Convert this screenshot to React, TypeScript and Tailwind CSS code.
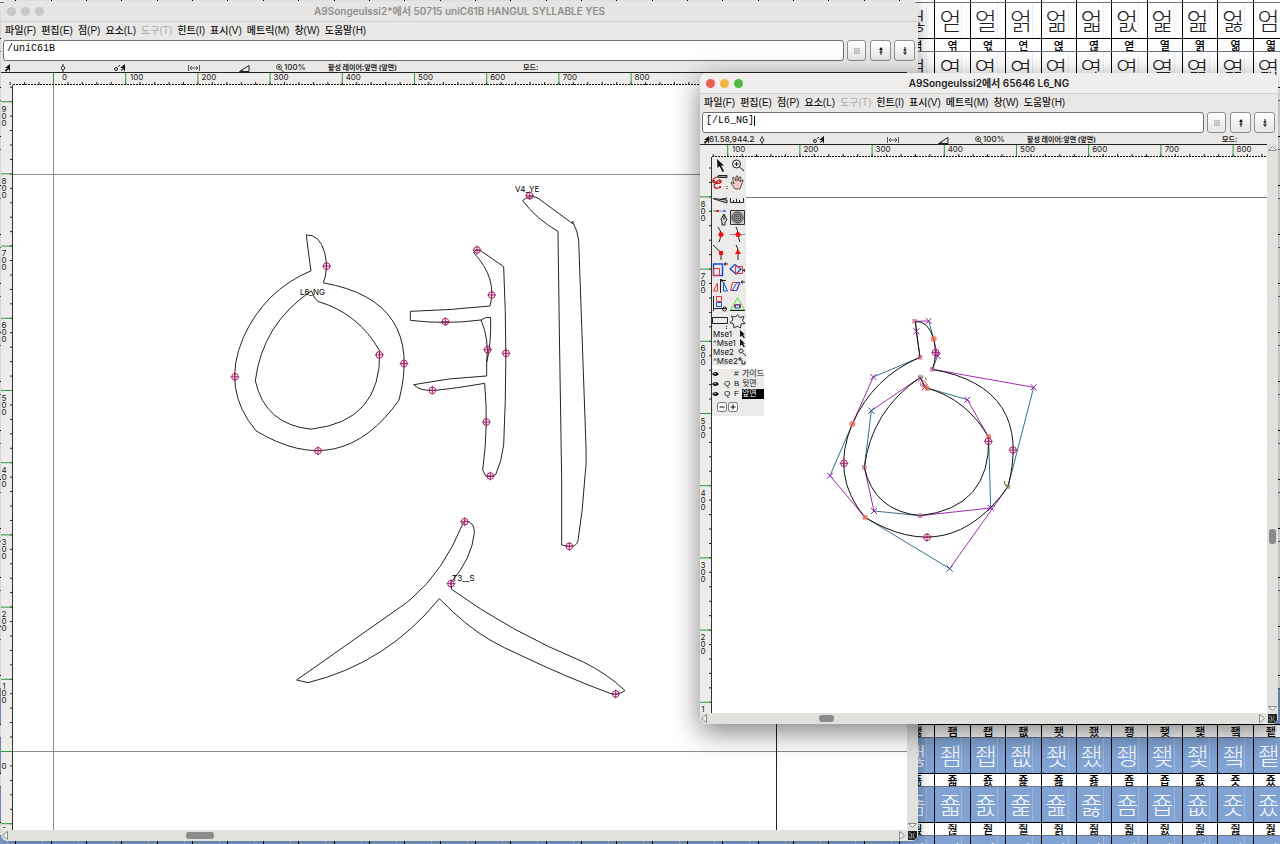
import type { ReactNode } from 'react';

// ---------------------------------------------------------------------------
// Types and data
// ---------------------------------------------------------------------------

type Point = [number, number];

/** A quadratic segment: off-curve control followed by the on-curve end. */
type Segment = [Point, Point];

interface Contour {
  start: Point;
  segments: Segment[];
}

const MENUS = [
  '파일(F)',
  '편집(E)',
  '점(P)',
  '요소(L)',
  '도구(T)',
  '힌트(I)',
  '표시(V)',
  '메트릭(M)',
  '창(W)',
  '도움말(H)',
];

/** Screen pixels per 100 font units at 100% zoom. */
const HUNDRED = 72.2;

// Outline coordinates are kept at three times the screen size.
const NG_CONTOURS: Contour[] = [
  {
    start: [330, 172],
    segments: [
      [[319, 94], [316, 64]],
      [[356, 63], [371, 117]],
      [[383, 168], [367, 208]],
      [[671, 262], [594, 560]],
      [[419, 806], [165, 652]],
      [[60, 527], [127, 372]],
      [[190, 231], [330, 172]],
    ],
  },
  {
    start: [331, 232],
    segments: [
      [[184, 332], [163, 502]],
      [[192, 633], [330, 647]],
      [[542, 624], [536, 412]],
      [[472, 299], [351, 264]],
      [[344, 262], [331, 232]],
    ],
  },
];

const NG_EXTREMA: Point[] = [[377, 158], [609, 450], [535, 424], [102, 490], [351, 712]];

const YE_EXTREMA: Point[] = [
  [771, 210],
  [815, 345],
  [676, 425],
  [803, 509],
  [858, 520],
  [637, 631],
  [799, 726],
  [811, 888],
  [929, 47],
  [1048, 1099],
];

const S_EXTREMA: Point[] = [[554, 125], [513, 311], [1007, 642]];

const CORNERS: Point[] = [[314, 64], [330, 172], [367, 208], [163, 502], [330, 647]];
const CURVES: Point[] = [[371, 117], [127, 372]];
const TANGENTS: Point[] = [[165, 652], [536, 410], [351, 265]];
const HINTED: Point[] = [[594, 560], [331, 231]];

function contourPath({ start, segments }: Contour) {
  return `M${start} ${segments.map(([off, on]) => `Q${off} ${on}`).join(' ')}Z`;
}

// ---------------------------------------------------------------------------
// Font view behind the glyph windows
// ---------------------------------------------------------------------------

const COLUMNS = Array.from({ length: 37 }, (_, i) => i);
const ROWS = Array.from({ length: 18 }, (_, i) => i);

/** Character of a cell; cells that the glyph windows cover stay blank. */
function syllable(row: number, column: number) {
  if (column < 26 || (row > 1 && row < 15)) return null;
  return String.fromCharCode(0xac00 + 6587 + row * 51 + column - 27);
}

function FontView() {
  return (
    <div
      aria-hidden="true"
      className="absolute -top-[11px] -left-[19px] w-[1308px] font-['Noto_Sans_CJK_KR',sans-serif]"
    >
      {ROWS.map((row) => (
        <div key={row}>
          <div className="grid h-[13px] grid-cols-37 border-t border-black bg-white">
            {COLUMNS.map((c) => (
              <span
                key={c}
                className="border-r border-black text-center text-[11px]/[12px] font-medium text-black"
              >
                {row > 0 && syllable(row, c)}
              </span>
            ))}
          </div>
          <div
            className={
              row >= 14
                ? 'grid h-[36px] grid-cols-37 border-t border-gray-500 bg-[#80a3d4] text-[#f4f7fc]'
                : 'grid h-[36px] grid-cols-37 border-t border-gray-500 bg-white text-[#222]'
            }
          >
            {COLUMNS.map((c) => (
              <span key={c} className="border-r border-black">
                <span className="block h-full w-[27px] border-r border-gray-300/40 text-right text-[24px]/[34px] font-light">
                  {syllable(row, c)}
                </span>
              </span>
            ))}
          </div>
        </div>
      ))}
    </div>
  );
}

// ---------------------------------------------------------------------------
// Rulers
// ---------------------------------------------------------------------------

const RULER_TEXT = 'fill-[#222] font-[Inter,sans-serif] text-[8px]';

/** Horizontal ruler; `zero` is the x of font unit 0. */
function HorizontalRuler({ zero, labels }: { zero: number; labels: number[] }) {
  const ticks = Array.from({ length: 70 }, (_, i) => zero + ((i - 4) * HUNDRED) / 5);
  return (
    <svg className="block h-[13px] w-full border-t border-[#222] bg-[#edecea]" aria-hidden="true">
      <line x1="12" x2="100%" y1="11.5" y2="11.5" stroke="#111" strokeDasharray="2 1" />
      {ticks.map((x) => (
        <line key={x} x1={x} x2={x} y1="9" y2="12" stroke="#222" />
      ))}
      {labels.map((n) => {
        const x = zero + (n * HUNDRED) / 100;
        return (
          <g key={n}>
            <line x1={x} x2={x} y1="0" y2="11" stroke="#2c9a3c" />
            <text x={x + 11} y="7" textAnchor="middle" className={RULER_TEXT}>
              {n}
            </text>
          </g>
        );
      })}
    </svg>
  );
}

/** Vertical ruler with the digits stacked; `zero` is the y of font unit 0. */
function VerticalRuler({ zero, labels }: { zero: number; labels: number[] }) {
  const ticks = Array.from({ length: 60 }, (_, i) => zero + ((6 - i) * HUNDRED) / 5);
  return (
    <svg className="block h-full w-[12px] shrink-0 bg-[#edecea]" aria-hidden="true">
      <line x1="11.5" x2="11.5" y1="0" y2="100%" stroke="#333" />
      {ticks.map((y) => (
        <line key={y} x1="9" x2="11" y1={y} y2={y} stroke="#222" />
      ))}
      {labels.map((n) => {
        const y = zero - (n * HUNDRED) / 100;
        const digits = String(n).split('');
        const first = y + 17 - (digits.length - 1) * 3.5;
        return (
          <g key={n}>
            <line x1="0" x2="11" y1={y} y2={y} stroke="#2c9a3c" />
            {digits.map((d, i) => (
              <text key={i} x="3" y={first + i * 7} textAnchor="middle" className={RULER_TEXT}>
                {d}
              </text>
            ))}
          </g>
        );
      })}
    </svg>
  );
}

// ---------------------------------------------------------------------------
// Window chrome
// ---------------------------------------------------------------------------

function InfoBar({ position }: { position?: string }) {
  return (
    <div className="flex h-[10px] pl-1 font-[Inter,'Noto_Sans_CJK_KR',sans-serif] text-[8px]/[11px] font-medium whitespace-nowrap text-[#222]">
      <span className="flex w-[54px] shrink-0">
        <svg className="mt-[2px] h-2 w-[5px] shrink-0" viewBox="0 0 5 8">
          <path d="M5 0v8L3.500 5 1 8 0 6l3-2H0z" fill="#111" />
        </svg>
        {position}
      </span>
      <span className="w-[53px] shrink-0">
        <svg className="mt-[2px] size-2" viewBox="0 0 8 8">
          <path d="M4 0v1.500M4 1.500l2 2.500-2 2.500L2 4zM4 6.500V8" fill="none" stroke="#222" />
        </svg>
      </span>
      <span className="w-[75px] shrink-0">
        <svg className="mt-[2px] ml-[2px] h-2 w-[12px]" viewBox="0 0 12 8">
          <circle cx="2" cy="5" r="1.500" fill="none" stroke="#222" />
          <path d="M4 3l2-2" stroke="#222" />
          <path d="M11 0v8L9.500 5 7.500 7 7 6l2-2H6z" fill="#111" />
        </svg>
      </span>
      <span className="w-[52px] shrink-0">
        <svg className="mt-[2px] ml-px h-2 w-[12px]" viewBox="0 0 12 8">
          <path d="M.5 1v6M11.500 1v6M2 4h8M4 2L2 4l2 2M8 2l2 2-2 2" fill="none" stroke="#333" strokeWidth=".8" />
        </svg>
      </span>
      <span className="w-[37px] shrink-0">
        <svg className="mt-[2px] h-2 w-[12px]" viewBox="0 0 12 8">
          <path d="M.5 7.500L10 1.500v6zM3 6l1 1.500" fill="none" stroke="#222" />
        </svg>
      </span>
      <span className="flex w-[52px] shrink-0">
        <svg className="mt-[2px] size-2 shrink-0" viewBox="0 0 8 8">
          <path d="M4.500 5L7.500 8M2 3h2M3 2v2" stroke="#222" />
          <circle cx="3" cy="3" r="2.500" fill="none" stroke="#222" strokeWidth=".8" />
        </svg>
        100%
      </span>
      <span className="w-[195px] shrink-0 text-[7px]/[12px] font-bold">활성 레이어:앞면 (앞면)</span>
      <span className="text-[7px]/[12px] font-bold">모드:</span>
    </div>
  );
}

const ENTRY_BUTTON =
  'flex h-[21px] items-center justify-center rounded-[3px] border border-[#8e8e8c] bg-linear-to-b from-white to-[#e6e6e4]';

function EntryRow({ value, caret }: { value: string; caret?: boolean }) {
  return (
    <div className="flex h-[22px] gap-[3px] pr-[3px] pl-[2px]">
      <label className="relative min-w-0 flex-1">
        <span className="sr-only">글리프</span>
        <input
          type="text"
          defaultValue={value}
          className="block h-[21px] w-full rounded-[3px] border border-[#6e6e6c] bg-white pb-1 pl-[3px] font-['Liberation_Mono',monospace] text-[10px] text-black outline-none"
        />
        {caret && <span className="absolute top-[4px] left-[52px] h-[10px] w-px bg-black" />}
      </label>
      <button type="button" aria-label="목록" className={`${ENTRY_BUTTON} w-[19px]`}>
        <svg className="size-[6px]" viewBox="0 0 6 6">
          <path d="M.5.5h5v5h-5zM2 2.500h2v1.500H2z" fill="#ddd" stroke="#bbb" />
        </svg>
      </button>
      <button type="button" aria-label="이전" className={`${ENTRY_BUTTON} ml-px w-[21px]`}>
        <svg className="h-2 w-[6px]" viewBox="0 0 6 8">
          <path d="M3 0l2 3H1zM2.500 2h1v6h-1zM1.500 4.500h3v1h-3z" fill="#111" />
        </svg>
      </button>
      <button type="button" aria-label="다음" className={`${ENTRY_BUTTON} w-[21px]`}>
        <svg className="h-2 w-[6px]" viewBox="0 0 6 8">
          <path d="M3 8l2-3H1zM2.500 0h1v6h-1zM1.500 2.500h3v1h-3z" fill="#111" />
        </svg>
      </button>
    </div>
  );
}

function Arrow({ d }: { d: string }) {
  return (
    <svg className="size-[11px] shrink-0" viewBox="0 0 11 11" aria-hidden="true">
      <path d={d} fill="#f4f4f2" stroke="#8a8a88" />
    </svg>
  );
}

interface GlyphWindowProps {
  title: string;
  active?: boolean;
  entry: string;
  position?: string;
  zeroX: number;
  zeroY: number;
  labelsX: number[];
  labelsY: number[];
  verticalThumb?: ReactNode;
  horizontalThumb: ReactNode;
  className: string;
  children: ReactNode;
}

function GlyphWindow({
  title,
  active = false,
  entry,
  position,
  zeroX,
  zeroY,
  labelsX,
  labelsY,
  verticalThumb,
  horizontalThumb,
  className,
  children,
}: GlyphWindowProps) {
  return (
    <section
      aria-label={title}
      className={`absolute flex flex-col overflow-hidden rounded-[7px] bg-[#e9e8e6] ${className}`}
    >
      <header
        className={`relative flex h-[21px] shrink-0 items-center justify-center border-b border-[#d2d1cf] ${active ? 'bg-[#f0efed]' : 'bg-[#e6e5e3]'}`}
      >
        <div className="absolute left-[6px] flex gap-[5px]">
          <button
            type="button"
            aria-label="닫기"
            className={`size-[9px] rounded-full ${active ? 'bg-[#ec5f55]' : 'bg-[#c9c8c6]'}`}
          />
          <button
            type="button"
            aria-label="최소화"
            className={`size-[9px] rounded-full ${active ? 'bg-[#f4b441]' : 'bg-[#c9c8c6]'}`}
          />
          <button
            type="button"
            aria-label="확대"
            className={`size-[9px] rounded-full ${active ? 'bg-[#51b944]' : 'bg-[#c9c8c6]'}`}
          />
        </div>
        <h1
          className={`font-[Inter,'Noto_Sans_CJK_KR',sans-serif] text-[10px]/[16px] font-semibold ${active ? 'text-[#222]' : 'text-[#8f8e8c]'}`}
        >
          {title}
        </h1>
      </header>
      <nav className="flex h-[18px] shrink-0 items-center gap-[5px] pl-1 font-['Liberation_Sans','Noto_Sans_CJK_KR',sans-serif] text-[10px]/[14px] font-medium whitespace-nowrap text-[#111]">
        {MENUS.map((m) => (
          <button key={m} type="button" disabled={m === '도구(T)'} className="disabled:text-[#b0afad]">
            {m}
          </button>
        ))}
      </nav>
      <EntryRow value={entry} caret={active} />
      <InfoBar position={position} />
      <div className="flex min-h-0 flex-1">
        <div className="flex min-w-0 flex-1 flex-col">
          <HorizontalRuler zero={zeroX} labels={labelsX} />
          <div className="flex min-h-0 flex-1">
            <VerticalRuler zero={zeroY} labels={labelsY} />
            <div className="relative min-w-0 flex-1 bg-white">{children}</div>
          </div>
        </div>
        <div className="flex w-[11px] shrink-0 flex-col bg-[#e1e2de]">
          <Arrow d="M1.500 6.500h8l-4-4z" />
          <div className="flex-1">{verticalThumb}</div>
          <Arrow d="M1.500 4.500h8l-4 4z" />
        </div>
      </div>
      <div className="flex h-[11px] shrink-0 bg-[#e1e2de]">
        <Arrow d="M6.500 1.500v8l-5-4z" />
        <div className="flex-1">{horizontalThumb}</div>
        <Arrow d="M3.500 1.500v8l5-4z" />
        <svg className="size-[11px] shrink-0" viewBox="0 0 11 11" aria-hidden="true">
          <path d="M1 1h9v7l-2 2H1z" fill="#222" />
          <path d="M2 6l2 3M4 3l1 5M7 3l-1 3 2 3M2 3h1" stroke="#bbb" strokeWidth=".8" />
        </svg>
      </div>
    </section>
  );
}

// ---------------------------------------------------------------------------
// Glyph drawing
// ---------------------------------------------------------------------------

function Extrema({ points }: { points: Point[] }) {
  return (
    <g fill="none" stroke="#a8206c" strokeWidth="3">
      {points.map(([x, y]) => (
        <path
          key={`${x},${y}`}
          d={`M${x - 10} ${y}a10 10 0 1 0 20 0a10 10 0 1 0-20 0M${x - 13} ${y}h26M${x} ${y - 13}v26`}
        />
      ))}
    </g>
  );
}

const CANVAS_TEXT = "fill-black font-[Inter,'Liberation_Sans',sans-serif] text-[8px]";

/** Syllable built from three references, shown as plain outlines. */
function SyllableCanvas() {
  return (
    <svg className="absolute inset-0 size-full" aria-hidden="true">
      <g transform="translate(-13 -85)">
        <g stroke="#8c8c8c">
          <path d="M13 174.500h900M13 751.500h900M53.500 80v760" />
          <path d="M776.500 80v760" stroke="#222" />
        </g>
        <g transform="translate(201 213.500) scale(.33333)" fill="none" stroke="#222" strokeWidth="3">
          {NG_CONTOURS.map((c) => (
            <path key={contourPath(c)} d={contourPath(c)} />
          ))}
          <Extrema points={NG_EXTREMA} />
        </g>
        <g transform="translate(220 180) scale(.33333)" fill="none" stroke="#222" strokeWidth="3">
          <path d="M571 394Q690 391 810 378Q833 295 761 218Q768 205 785 214L851 260Q864 530 851 795Q845 845 827 884Q812 894 797 888L788 870Q806 740 794 610Q700 626 645 631Q600 634 581 614Q690 592 800 588V548Q808 475 783 420Q676 434 571 421Z" />
          <path d="M783 420Q795 411 812 412Q814 490 800 548" />
          <path d="M908 62Q950 118 1014 154L1018 450L1025 900V1095Q1048 1102 1060 1098Q1073 1094 1075 1075Q1089 990 1094 900Q1101 850 1098 800L1076 180Q1072 150 1060 130L1058 124V131L952 53Q925 44 908 62Z" />
          <Extrema points={YE_EXTREMA} />
        </g>
        <g transform="translate(280 480) scale(.33333)" fill="none" stroke="#222" strokeWidth="3">
          <path d="M549 130Q490 275 395 355Q380 369 360 382L50 600L84 608Q320 550 478 356Q560 440 630 480Q670 503 720 525Q860 592 990 640Q1010 648 1035 632Q980 580 910 546Q690 455 515 328L513 308Q575 235 583 160Q585 125 555 123Q550 126 549 130Z" />
          <Extrema points={S_EXTREMA} />
        </g>
        <text x="300" y="295" className={CANVAS_TEXT}>
          L6_NG
        </text>
        <text x="515" y="192" className={CANVAS_TEXT}>
          V4_YE
        </text>
        <text x="452" y="581" className={CANVAS_TEXT}>
          T3__S
        </text>
      </g>
    </svg>
  );
}

/** Editable component with its control handles and point markers. */
function ComponentCanvas() {
  return (
    <svg className="absolute inset-0 size-full" aria-hidden="true">
      <g transform="translate(-712 -157)">
        <path d="M712 197.500h600" stroke="#777" />
        <g transform="translate(810 300) scale(.33333)" fill="none" strokeWidth="3">
          {NG_CONTOURS.map(({ start, segments }) =>
            segments.map(([off, on], i) => {
              const from = i === 0 ? start : segments[i - 1][1];
              return (
                <g key={`${off}`}>
                  <path d={`M${from}L${off}`} stroke="#a02cb0" />
                  <path d={`M${off}L${on}`} stroke="#35708c" />
                </g>
              );
            }),
          )}
          {NG_CONTOURS.map((c) => (
            <path key={contourPath(c)} d={contourPath(c)} stroke="#111" />
          ))}
          {NG_CONTOURS.flatMap((c) => c.segments).map(([[x, y]]) => (
            <path
              key={`${x},${y}`}
              d={`M${x - 9} ${y - 9}l18 18M${x + 9} ${y - 9}l-18 18`}
              stroke={x === 419 || x === 184 ? '#1d4f86' : '#8a1ea0'}
            />
          ))}
          {CORNERS.map(([x, y]) => (
            <rect key={`${x},${y}`} x={x - 7} y={y - 7} width="14" height="14" fill="#b0507c" fillOpacity=".6" />
          ))}
          {CURVES.map(([x, y]) => (
            <circle key={`${x},${y}`} cx={x} cy={y} r="9" fill="#f06a50" fillOpacity=".8" />
          ))}
          {TANGENTS.map(([x, y]) => (
            <rect key={`${x},${y}`} x={x - 7} y={y - 7} width="14" height="14" fill="#f06a50" fillOpacity=".8" />
          ))}
          {HINTED.map(([x, y]) => (
            <rect key={`${x},${y}`} x={x - 7} y={y - 7} width="14" height="14" fill="#8f8f50" fillOpacity=".6" />
          ))}
          <circle cx="340" cy="252" r="9" stroke="#e8705c" />
          <path d="M324 229l16 16M340 229l-16 16" stroke="#8a1ea0" />
          <path d="M584 543v10l12 8M346 233l3 7" stroke="#5f5f1e" />
          <Extrema points={NG_EXTREMA} />
        </g>
      </g>
    </svg>
  );
}

// ---------------------------------------------------------------------------
// Tool and layer palettes
// ---------------------------------------------------------------------------

const TOOLS: { name: string; icon: ReactNode }[] = [
  { name: '포인터', icon: <path d="M5 2l7 6.500H9l3 5.500-1.500 1-3-6-2 2z" fill="#111" /> },
  {
    name: '확대',
    icon: (
      <g fill="none" stroke="#222">
        <circle cx="7.500" cy="7" r="4" />
        <path d="M5.500 7h4M7.500 5v4M10.500 10l4.500 4" />
      </g>
    ),
  },
  {
    name: '자유곡선',
    icon: (
      <g fill="none">
        <path d="M7 1.500h8v2H7l-2-1z" fill="#999" stroke="#222" />
        <path d="M5 3Q0 5 1 8Q3 10 7 6Q11 7 8 9Q2 9 2 12Q3 16 9 13" stroke="#b22" strokeWidth="1.300" />
        <path d="M1 6h2v2H1zM7 6h2v2H7zM7 12h2v2H7z" fill="#d22" />
        <path d="M15 12v1M15 14v1" stroke="#222" />
      </g>
    ),
  },
  {
    name: '손',
    icon: (
      <path
        d="M6 15L2 9q0-2 2 0l1 1L3.500 4q1-2 2 0L7 7V2.500q1-1.500 2 0V7l1.500-4q1.500-1 1.500 1l-1 4 2-2q2-.5 1 1l-2 5-1 3z"
        fill="#f3c9c4"
        stroke="#333"
        strokeWidth=".8"
      />
    ),
  },
  {
    name: '칼',
    icon: <path d="M1 6.500L15 8v3L10 9.500zM8 7.500L15 6" fill="#ccc" stroke="#222" />,
  },
  { name: '자', icon: <path d="M1.500 6v4.500h13V6M4.500 8v2M7.500 7v3M10.500 8v2" fill="none" stroke="#222" /> },
  {
    name: '펜',
    icon: (
      <g fill="none">
        <path d="M1 2h6" stroke="#2a2" />
        <path d="M7 2h7" stroke="#6ad" />
        <path d="M4 1h3v2H4z" fill="#d22" />
        <path d="M11 1l3 2M14 1l-3 2" stroke="#55d" strokeWidth=".7" />
        <path d="M12 5l3 6-2 2v3h-3v-3L9 10zM12 6v5" fill="#ddd" stroke="#222" />
      </g>
    ),
  },
  {
    name: '나선',
    icon: (
      <g fill="none" stroke="#333">
        <path d="M1.500 1.500h14v14h-14z" fill="#cfcecb" />
        <circle cx="8.500" cy="8.500" r="5.500" fill="#aaa" />
        <circle cx="8.500" cy="8.500" r="3.500" />
        <circle cx="8.500" cy="8.500" r="1.500" />
      </g>
    ),
  },
  {
    name: '곡선점',
    icon: (
      <g fill="none" stroke="#222">
        <path d="M6 1Q9 5 9 8T7 16" />
        <circle cx="9" cy="8.500" r="2.500" fill="#e11" stroke="none" />
      </g>
    ),
  },
  {
    name: '수평수직점',
    icon: (
      <g fill="none" stroke="#222">
        <path d="M7 1Q9 5 9 8T11 16" />
        <path d="M1 8.500h15" stroke="#888" />
        <circle cx="9" cy="8.500" r="2.500" fill="#e11" stroke="none" />
      </g>
    ),
  },
  {
    name: '모서리점',
    icon: (
      <g fill="none" stroke="#222">
        <path d="M1 1l8 7.500V16" />
        <path d="M7 7h4v4H7z" fill="#e11" stroke="none" />
      </g>
    ),
  },
  {
    name: '접점',
    icon: (
      <g fill="none" stroke="#222">
        <path d="M7 1Q9 4 9 8v8" />
        <path d="M9 5l3 5H6z" fill="#e11" stroke="none" />
      </g>
    ),
  },
  {
    name: '크기 조절',
    icon: (
      <g fill="none">
        <path d="M1.500 3v11.500h9V3z" stroke="#1b4fd0" strokeWidth="1.500" />
        <path d="M1.500 7.500h6v7h-6z" stroke="#e33" />
        <path d="M12 3h4M12 3l2-1.500M12 3l2 1.500" stroke="#222" />
      </g>
    ),
  },
  {
    name: '회전',
    icon: (
      <g fill="none">
        <path d="M1 8l5-4.500L12 8l-5 5z" stroke="#1b4fd0" strokeWidth="1.300" />
        <path d="M6.500 5.500h7v7h-7z" stroke="#e33" />
        <path d="M13 9l3-1v3z" fill="#222" />
      </g>
    ),
  },
  {
    name: '뒤집기',
    icon: (
      <g fill="none">
        <path d="M5.500 5v8h-4z" stroke="#e33" />
        <path d="M11.500 4v9h4z" stroke="#1b4fd0" />
        <path d="M8.500 1v14M9 2.500h5M10 1l-1 1.500L11 4" stroke="#222" />
      </g>
    ),
  },
  {
    name: '기울이기',
    icon: (
      <g fill="none">
        <path d="M1.500 12.500l2-8h7l-3 8z" stroke="#e33" />
        <path d="M3 12.500l5-8h3l-3 8z" stroke="#1b4fd0" />
        <path d="M12 4h4M12 4l2-1.500M12 4l2 1.500" stroke="#222" />
      </g>
    ),
  },
  {
    name: '3차원 회전',
    icon: (
      <g fill="none">
        <path d="M4.500.5h5v5h-5z" stroke="#e33" />
        <path d="M4.500 6.500h5v4h-5z" stroke="#1b4fd0" />
        <path d="M1.500 0v15M1 12.500h14" stroke="#222" />
        <circle cx="12.500" cy="13" r="2" stroke="#222" />
      </g>
    ),
  },
  {
    name: '원근',
    icon: (
      <g fill="none">
        <path d="M1.500 14L8.500 2l7 12z" stroke="#7be06a" strokeWidth="1.300" />
        <path d="M5.500 12V8.500h6V12" stroke="#e33" />
        <path d="M6.500 9h4v3h-4z" stroke="#1b4fd0" />
        <path d="M1 14.500h15" stroke="#222" />
      </g>
    ),
  },
  {
    name: '사각형',
    icon: (
      <g fill="none" stroke="#222">
        <path d="M.5 4.500h15v6H.5z" />
        <path d="M14.500 13v1M14.500 15v1" />
      </g>
    ),
  },
  {
    name: '별',
    icon: (
      <path
        d="M8.500 1.500l2 3 4.500-1-1.500 4 2.500 3-4 .5-.5 4-3-2-3.500 2-.5-4-3.500-1.500L4 7 2.500 3l4 1z"
        fill="none"
        stroke="#333"
      />
    ),
  },
];

const MOUSE_BINDINGS = [
  { label: 'Mse1', icon: 'M2 0l5 4.500H5l2 3.500H5.500L4 5.500 2 7z' },
  { label: '^Mse1', icon: 'M2 0l5 4.500H5l2 3.500H5.500L4 5.500 2 7z' },
  { label: 'Mse2', icon: 'M3 1a2 2 0 1 0 .1 0M5 5l3 3' },
  { label: '^Mse2', icon: 'M2 0v4M0 2h4M4 3v4h3V4' },
];

function ToolPalette() {
  return (
    <div className="absolute top-0 left-0 w-[34px] bg-[#ecebe9]">
      <div className="grid h-[173px] grid-cols-2 grid-rows-10">
        {TOOLS.map(({ name, icon }) => (
          <button key={name} type="button" aria-label={name} className="overflow-hidden">
            <svg className="size-[17px]" viewBox="0 0 17 17">
              {icon}
            </svg>
          </button>
        ))}
      </div>
      <ul className="font-[Inter,sans-serif] text-[8px]/[9px] text-[#111]">
        {MOUSE_BINDINGS.map(({ label, icon }, i) => (
          <li key={label} className="flex justify-between pl-px">
            {label}
            <svg className="h-[9px] w-2 shrink-0" viewBox="0 0 8 9">
              <path d={icon} fill={i < 2 ? '#111' : 'none'} stroke="#222" strokeWidth={i < 2 ? 0 : 1} />
            </svg>
          </li>
        ))}
      </ul>
    </div>
  );
}

const LAYERS = [
  { kind: '', key: '#', name: '가이드' },
  { kind: 'Q', key: 'B', name: '뒷면' },
  { kind: 'Q', key: 'F', name: '앞면' },
];

function LayerPalette() {
  return (
    <div className="absolute top-[212px] left-0 w-[52px] bg-[#ecebe9] pb-1 font-['Liberation_Sans','Noto_Sans_CJK_KR',sans-serif] text-[8px]/[10px] text-[#111]">
      {LAYERS.map(({ kind, key, name }) => (
        <div key={key} className="flex h-[10px] items-center">
          <svg className="h-[6px] w-[7px]" viewBox="0 0 7 6">
            <path d="M0 3q3.500-4 7 0-3.500 4-7 0z" fill="#111" />
            <circle cx="3" cy="2.500" r=".7" fill="#fff" />
          </svg>
          <span className="w-[15px] pl-[5px]">{kind}</span>
          <span className="w-[8px]">{key}</span>
          <span
            className={
              key === 'F' ? 'h-[10px] flex-1 bg-black whitespace-nowrap text-white' : 'flex-1 whitespace-nowrap'
            }
          >
            {name}
          </span>
        </div>
      ))}
      <div className="flex gap-px pt-[3px] pl-[5px]">
        {['M2.500 5h5', 'M2.500 5h5M5 2.500v5'].map((d, i) => (
          <button key={d} type="button" aria-label={i ? '레이어 추가' : '레이어 삭제'}>
            <svg className="size-[10px]" viewBox="0 0 10 10">
              <rect x=".5" y=".5" width="9" height="9" rx="2" fill="#fafafa" stroke="#555" strokeWidth=".8" />
              <path d={d} stroke="#111" />
            </svg>
          </button>
        ))}
      </div>
    </div>
  );
}

// ---------------------------------------------------------------------------
// App
// ---------------------------------------------------------------------------

export default function App() {
  return (
    <main className="relative h-screen overflow-hidden bg-white">
      <FontView />
      <GlyphWindow
        title="A9Songeulssi2*에서 50715 uniC61B HANGUL SYLLABLE YES"
        entry="/uniC61B"
        zeroX={52.5}
        zeroY={666.5}
        labelsX={[0, 100, 200, 300, 400, 500, 600, 700, 800]}
        labelsY={[900, 800, 700, 600, 500, 400, 300, 200, 100, 0, -100]}
        horizontalThumb={<div className="mt-[2px] ml-[174px] h-[7px] w-[28px] rounded-[3px] bg-[#8b8b89]" />}
        className="top-px right-[362px] bottom-[3px] left-px shadow-[0_2px_16px_rgba(0,0,0,0.35)]"
      >
        <SyllableCanvas />
      </GlyphWindow>
      <GlyphWindow
        active
        title="A9Songeulssi2에서 65646 L6_NG"
        entry="[/L6_NG]"
        position="61.58,944.2"
        zeroX={-44.5}
        zeroY={617.5}
        labelsX={[100, 200, 300, 400, 500, 600, 700, 800]}
        labelsY={[800, 700, 600, 500, 400, 300, 200, 100]}
        verticalThumb={<div className="mt-[374px] ml-[2px] h-[15px] w-[7px] rounded-[3px] bg-[#8b8b89]" />}
        horizontalThumb={<div className="mt-[2px] ml-[108px] h-[7px] w-[15px] rounded-[3px] bg-[#8b8b89]" />}
        className="top-[73px] right-[2px] bottom-[120px] left-[700px] shadow-[0_8px_28px_rgba(0,0,0,0.5)]"
      >
        <ComponentCanvas />
        <ToolPalette />
        <LayerPalette />
      </GlyphWindow>
    </main>
  );
}
